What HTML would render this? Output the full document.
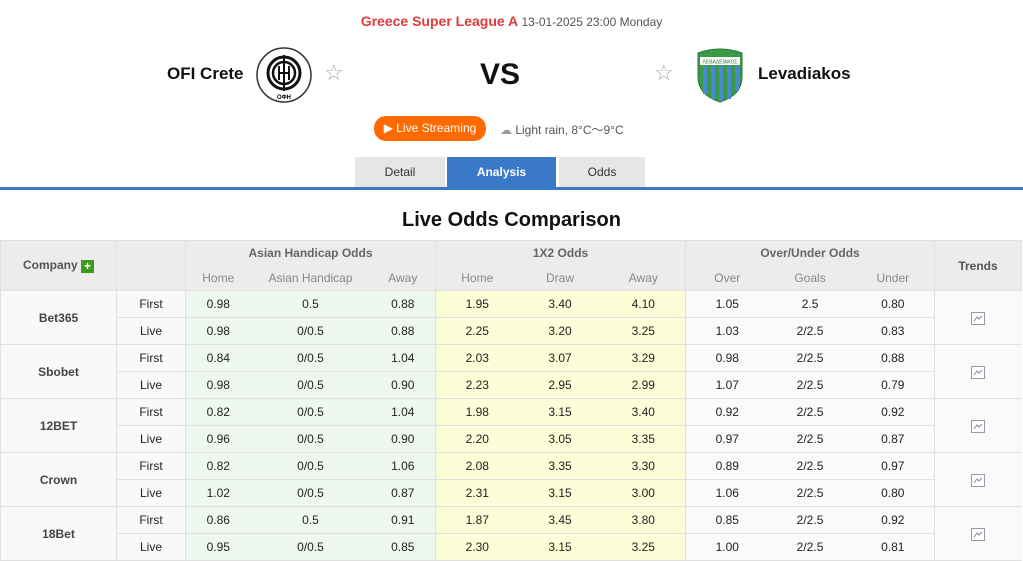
<!DOCTYPE html>
<html><head><meta charset="utf-8"><style>
*{margin:0;padding:0;box-sizing:border-box}
body{width:1023px;height:557px;overflow:hidden;background:#fff;font-family:"Liberation Sans",sans-serif;color:#222;position:relative}
.abs{position:absolute}
.hdr{top:13px;left:0;width:1023px;text-align:center;font-size:12px;color:#555}
.hdr b{color:#e03a3a;font-size:14px}
.team{top:64px;font-size:17px;font-weight:bold;color:#111}
.vs{top:58px;left:480px;font-size:30px;font-weight:bold;color:#111}
.star{font-size:22px;color:#aaa;top:60px}
.live{left:374px;top:116px;width:112px;height:25px;background:#ff6a00;border-radius:12px;color:#fff;font-size:12px;line-height:25px;text-align:center}
.weather{left:500px;top:121px;font-size:12px;color:#555}
.tab{top:157px;height:30px;line-height:30px;text-align:center;font-size:12px;background:#e6e6e6;color:#333}
.line{top:187px;left:0;width:1023px;height:3px;background:#3a78c8}
.title{top:209px;left:0;width:1023px;text-align:center;font-size:20px;font-weight:bold;color:#111}
table{position:absolute;top:240px;left:0;width:1021px;border-collapse:collapse;table-layout:fixed;font-size:12px}
td,th{border:1px solid #e0e0e0;text-align:center;height:27px;padding:0}
td{border-left:none;border-right:none}
td.c,td.t,td.tr,.t+.g,.g+.y,.y+.w{border-left:1px solid #e0e0e0}
td.c,td.t{border-right:1px solid #e0e0e0}
th{background:#ececec;color:#666;font-weight:bold;height:25px;font-size:12px}
th.s{font-weight:normal;color:#888}
.c{font-weight:bold;color:#444;background:#f9f9f9}
.t{background:#f9f9f9}
.g{background:#eef8ee}
.y{background:#fdfdd8}
.w{background:#fafafa}
.plus{display:inline-block;width:13px;height:13px;background:#3c9a1e;color:#fff;font-size:12px;line-height:13px;vertical-align:middle;font-weight:bold}
.tr svg{vertical-align:middle}
</style></head><body>
<div class="abs hdr"><b>Greece Super League A</b> 13-01-2025 23:00 Monday</div>
<div class="abs team" style="left:167px">OFI Crete</div>
<svg class="abs" style="left:255px;top:46px" width="58" height="58" viewBox="0 0 58 58"><circle cx="29" cy="29" r="27" fill="#fff" stroke="#333" stroke-width="1.5"/><circle cx="29" cy="27" r="16" fill="none" stroke="#111" stroke-width="3"/><circle cx="29" cy="27" r="11" fill="none" stroke="#111" stroke-width="2.5"/><line x1="29" y1="9" x2="29" y2="45" stroke="#111" stroke-width="2"/><line x1="24" y1="20" x2="24" y2="34" stroke="#111" stroke-width="2"/><line x1="34" y1="20" x2="34" y2="34" stroke="#111" stroke-width="2"/><line x1="24" y1="27" x2="34" y2="27" stroke="#111" stroke-width="2"/><text x="29" y="53" font-size="6" text-anchor="middle" font-family="Liberation Sans" font-weight="bold">ΟΦΗ</text></svg>
<div class="abs star" style="left:324px">☆</div>
<div class="abs vs">VS</div>
<div class="abs star" style="left:654px">☆</div>
<svg class="abs" style="left:695px;top:47px" width="50" height="56" viewBox="0 0 50 56"><path d="M3 6 Q25 -2 47 6 L47 30 Q47 48 25 55 Q3 48 3 30 Z" fill="#3a9a48" stroke="#2b7a36"/><rect x="5" y="10" width="40" height="8" fill="#fff"/><g fill="#4a8ad0"><rect x="8" y="19" width="4" height="28"/><rect x="16" y="19" width="4" height="33"/><rect x="24" y="19" width="4" height="35"/><rect x="32" y="19" width="4" height="33"/><rect x="40" y="19" width="4" height="25"/></g><text x="25" y="16.5" font-size="5" text-anchor="middle" fill="#2b7a36" font-family="Liberation Sans">ΛΕΒΑΔΕΙΑΚΟΣ</text></svg>
<div class="abs team" style="left:758px">Levadiakos</div>
<div class="abs live">&#9654;&#xFE0E; Live Streaming</div>
<div class="abs weather"><span style="color:#999">☁</span> Light rain, 8°C～9°C</div>
<div class="abs tab" style="left:355px;width:90px">Detail</div>
<div class="abs tab" style="left:447px;width:109px;background:#3a78c8;color:#fff;font-weight:bold">Analysis</div>
<div class="abs tab" style="left:559px;width:86px">Odds</div>
<div class="abs line"></div>
<div class="abs title">Live Odds Comparison</div>
<table>
<colgroup><col style="width:116px"><col style="width:69px"><col style="width:65px"><col style="width:120px"><col style="width:65px"><col style="width:83px"><col style="width:83px"><col style="width:84px"><col style="width:83px"><col style="width:83px"><col style="width:83px"><col style="width:87px"></colgroup>
<tr><th rowspan="2" style="color:#555">Company <span class="plus">+</span></th><th rowspan="2"></th><th colspan="3" style="border-bottom:none">Asian Handicap Odds</th><th colspan="3" style="border-bottom:none">1X2 Odds</th><th colspan="3" style="border-bottom:none">Over/Under Odds</th><th rowspan="2" style="color:#555">Trends</th></tr>
<tr><th class="s" style="border-top:none;border-right:none">Home</th><th class="s" style="border:none">Asian Handicap</th><th class="s" style="border-top:none;border-left:none">Away</th><th class="s" style="border-top:none;border-right:none">Home</th><th class="s" style="border:none">Draw</th><th class="s" style="border-top:none;border-left:none">Away</th><th class="s" style="border-top:none;border-right:none">Over</th><th class="s" style="border:none">Goals</th><th class="s" style="border-top:none;border-left:none">Under</th></tr>
<tr><td rowspan="2" class="c">Bet365</td><td class="t">First</td><td class="g">0.98</td><td class="g">0.5</td><td class="g">0.88</td><td class="y">1.95</td><td class="y">3.40</td><td class="y">4.10</td><td class="w">1.05</td><td class="w">2.5</td><td class="w">0.80</td><td rowspan="2" class="w tr"><svg width="14" height="13"><rect x="0.5" y="0.5" width="13" height="12" fill="#fff" stroke="#99a"/><path d="M3 9 L6 5 L8 7 L11 4" fill="none" stroke="#889"/></svg></td></tr>
<tr><td class="t">Live</td><td class="g">0.98</td><td class="g">0/0.5</td><td class="g">0.88</td><td class="y">2.25</td><td class="y">3.20</td><td class="y">3.25</td><td class="w">1.03</td><td class="w">2/2.5</td><td class="w">0.83</td></tr>
<tr><td rowspan="2" class="c">Sbobet</td><td class="t">First</td><td class="g">0.84</td><td class="g">0/0.5</td><td class="g">1.04</td><td class="y">2.03</td><td class="y">3.07</td><td class="y">3.29</td><td class="w">0.98</td><td class="w">2/2.5</td><td class="w">0.88</td><td rowspan="2" class="w tr"><svg width="14" height="13"><rect x="0.5" y="0.5" width="13" height="12" fill="#fff" stroke="#99a"/><path d="M3 9 L6 5 L8 7 L11 4" fill="none" stroke="#889"/></svg></td></tr>
<tr><td class="t">Live</td><td class="g">0.98</td><td class="g">0/0.5</td><td class="g">0.90</td><td class="y">2.23</td><td class="y">2.95</td><td class="y">2.99</td><td class="w">1.07</td><td class="w">2/2.5</td><td class="w">0.79</td></tr>
<tr><td rowspan="2" class="c">12BET</td><td class="t">First</td><td class="g">0.82</td><td class="g">0/0.5</td><td class="g">1.04</td><td class="y">1.98</td><td class="y">3.15</td><td class="y">3.40</td><td class="w">0.92</td><td class="w">2/2.5</td><td class="w">0.92</td><td rowspan="2" class="w tr"><svg width="14" height="13"><rect x="0.5" y="0.5" width="13" height="12" fill="#fff" stroke="#99a"/><path d="M3 9 L6 5 L8 7 L11 4" fill="none" stroke="#889"/></svg></td></tr>
<tr><td class="t">Live</td><td class="g">0.96</td><td class="g">0/0.5</td><td class="g">0.90</td><td class="y">2.20</td><td class="y">3.05</td><td class="y">3.35</td><td class="w">0.97</td><td class="w">2/2.5</td><td class="w">0.87</td></tr>
<tr><td rowspan="2" class="c">Crown</td><td class="t">First</td><td class="g">0.82</td><td class="g">0/0.5</td><td class="g">1.06</td><td class="y">2.08</td><td class="y">3.35</td><td class="y">3.30</td><td class="w">0.89</td><td class="w">2/2.5</td><td class="w">0.97</td><td rowspan="2" class="w tr"><svg width="14" height="13"><rect x="0.5" y="0.5" width="13" height="12" fill="#fff" stroke="#99a"/><path d="M3 9 L6 5 L8 7 L11 4" fill="none" stroke="#889"/></svg></td></tr>
<tr><td class="t">Live</td><td class="g">1.02</td><td class="g">0/0.5</td><td class="g">0.87</td><td class="y">2.31</td><td class="y">3.15</td><td class="y">3.00</td><td class="w">1.06</td><td class="w">2/2.5</td><td class="w">0.80</td></tr>
<tr><td rowspan="2" class="c">18Bet</td><td class="t">First</td><td class="g">0.86</td><td class="g">0.5</td><td class="g">0.91</td><td class="y">1.87</td><td class="y">3.45</td><td class="y">3.80</td><td class="w">0.85</td><td class="w">2/2.5</td><td class="w">0.92</td><td rowspan="2" class="w tr"><svg width="14" height="13"><rect x="0.5" y="0.5" width="13" height="12" fill="#fff" stroke="#99a"/><path d="M3 9 L6 5 L8 7 L11 4" fill="none" stroke="#889"/></svg></td></tr>
<tr><td class="t">Live</td><td class="g">0.95</td><td class="g">0/0.5</td><td class="g">0.85</td><td class="y">2.30</td><td class="y">3.15</td><td class="y">3.25</td><td class="w">1.00</td><td class="w">2/2.5</td><td class="w">0.81</td></tr>
</table>
</body></html>
